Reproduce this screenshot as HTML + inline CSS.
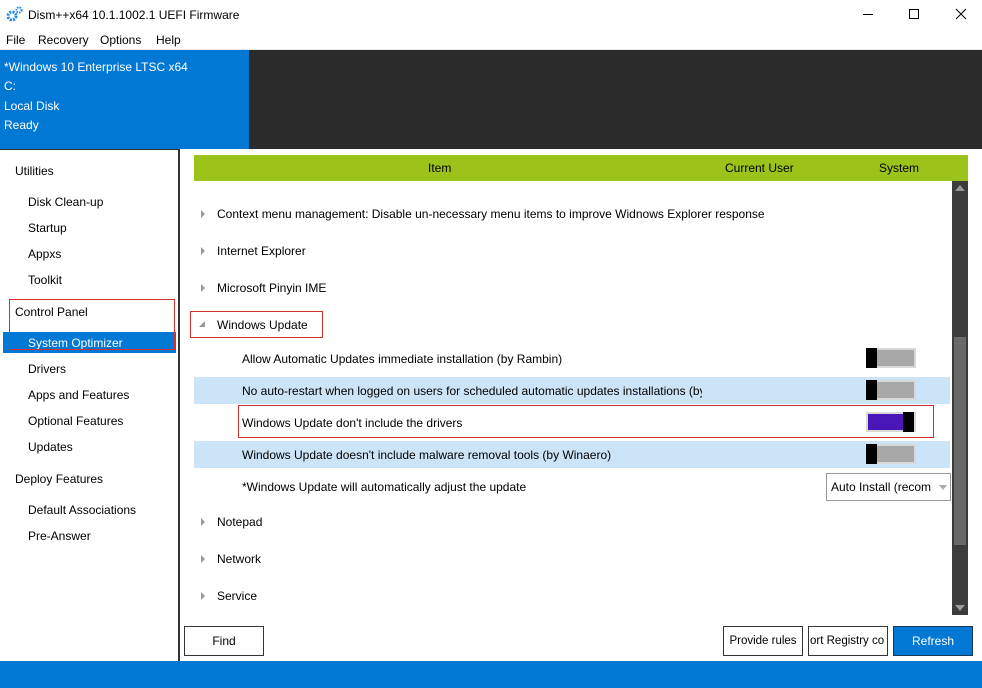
<!DOCTYPE html>
<html><head><meta charset="utf-8"><style>
*{margin:0;padding:0;box-sizing:border-box}
body{width:982px;height:688px;position:relative;overflow:hidden;background:#fff;font-family:"Liberation Sans",sans-serif;font-size:12px;color:#000}
.a{position:absolute;white-space:nowrap}
.red{z-index:5;border:1px solid #d32f2f}
.tri{position:absolute;width:0;height:0;border-top:4px solid transparent;border-bottom:4px solid transparent;border-left:4px solid #999}
.tog{position:absolute;width:50px;height:20px;background:#a8a8a8;border:2px solid #d8d8d8}
.tog i{position:absolute;left:-2px;top:-2px;width:11px;height:20px;background:#000}
.btn{position:absolute;height:30px;border:1px solid #333;background:#fff;text-align:center;line-height:28px;overflow:hidden;white-space:nowrap}
</style></head><body>
<svg class="a" style="left:6px;top:6px" width="18" height="16" viewBox="0 0 18 16"><circle cx="6" cy="10" r="4" fill="none" stroke="#1e88e5" stroke-width="3" stroke-dasharray="2 1.2"/><circle cx="13" cy="4" r="2.6" fill="none" stroke="#1e88e5" stroke-width="2" stroke-dasharray="1.5 1"/></svg>
<div class="a" style="left:28px;top:8px">Dism++x64 10.1.1002.1 UEFI Firmware</div>
<div class="a" style="left:863px;top:14px;width:10px;height:1px;background:#000"></div>
<div class="a" style="left:909px;top:9px;width:10px;height:10px;border:1px solid #000"></div>
<svg class="a" style="left:955px;top:8px" width="12" height="12"><path d="M1 1L11 11M11 1L1 11" stroke="#000" stroke-width="1"/></svg>
<div class="a" style="left:6px;top:33px">File</div>
<div class="a" style="left:38px;top:33px">Recovery</div>
<div class="a" style="left:100px;top:33px">Options</div>
<div class="a" style="left:156px;top:33px">Help</div>
<div class="a" style="left:0;top:49px;width:982px;height:1px;background:#e6e6e6"></div>
<div class="a" style="left:0;top:50px;width:249px;height:99px;background:#0078d4"></div>
<div class="a" style="left:249px;top:50px;width:733px;height:99px;background:#2b2b2b"></div>
<div class="a" style="left:4px;top:58px;color:#fff;line-height:19.3px">*Windows 10 Enterprise LTSC x64<br>C:<br>Local Disk<br>Ready</div>
<div class="a" style="left:0;top:149px;width:180px;height:512px;border-right:2px solid #333;border-top:1px solid #333;background:#fff"></div>
<div class="a" style="left:15px;top:164px">Utilities</div>
<div class="a" style="left:28px;top:195px">Disk Clean-up</div>
<div class="a" style="left:28px;top:221px">Startup</div>
<div class="a" style="left:28px;top:247px">Appxs</div>
<div class="a" style="left:28px;top:273px">Toolkit</div>
<div class="a" style="left:15px;top:305px">Control Panel</div>
<div class="a" style="left:3px;top:332px;width:173px;height:21px;background:#0078d4"></div>
<div class="a" style="left:28px;top:336px;color:#fff">System Optimizer</div>
<div class="a red" style="left:9px;top:299px;width:166px;height:51px"></div>
<div class="a" style="left:28px;top:362px">Drivers</div>
<div class="a" style="left:28px;top:388px">Apps and Features</div>
<div class="a" style="left:28px;top:414px">Optional Features</div>
<div class="a" style="left:28px;top:440px">Updates</div>
<div class="a" style="left:15px;top:472px">Deploy Features</div>
<div class="a" style="left:28px;top:503px">Default Associations</div>
<div class="a" style="left:28px;top:529px">Pre-Answer</div>
<div class="a" style="left:194px;top:155px;width:774px;height:26px;background:#9bc31a"></div>
<div class="a" style="left:428px;top:161px">Item</div>
<div class="a" style="left:725px;top:161px">Current User</div>
<div class="a" style="left:879px;top:161px">System</div>
<div class="a" style="left:952px;top:181px;width:16px;height:434px;background:#3c3c3c"></div>
<div class="a" style="left:954px;top:337px;width:12px;height:208px;background:#6a6a6a"></div>
<svg class="a" style="left:955px;top:185px" width="10" height="6"><path d="M0 6L5 0L10 6Z" fill="#999"/></svg>
<svg class="a" style="left:955px;top:605px" width="10" height="6"><path d="M0 0L5 6L10 0Z" fill="#999"/></svg>
<div class="tri" style="left:201px;top:210px"></div><div class="a" style="left:217px;top:207px">Context menu management: Disable un-necessary menu items to improve Widnows Explorer response</div>
<div class="tri" style="left:201px;top:247px"></div><div class="a" style="left:217px;top:244px">Internet Explorer</div>
<div class="tri" style="left:201px;top:284px"></div><div class="a" style="left:217px;top:281px">Microsoft Pinyin IME</div>
<svg class="a" style="left:199px;top:321px" width="7" height="7"><path d="M6 0L6 6L0 6Z" fill="#999"/></svg>
<div class="a" style="left:217px;top:318px">Windows Update</div>
<div class="a red" style="left:190px;top:311px;width:133px;height:27px"></div>
<div class="a" style="left:242px;top:352px">Allow Automatic Updates immediate installation (by Rambin)</div>
<div class="tog" style="left:866px;top:348px"><i></i></div>
<div class="a" style="left:194px;top:377px;width:756px;height:27px;background:#cce4f7"></div>
<div class="a" style="left:242px;top:384px;width:460px;overflow:hidden">No auto-restart when logged on users for scheduled automatic updates installations (by</div>
<div class="tog" style="left:866px;top:380px"><i></i></div>
<div class="a" style="left:242px;top:416px">Windows Update don't include the drivers</div>
<div class="tog" style="left:866px;top:412px;background:#4a16b8"><i style="left:35px"></i></div>
<div class="a red" style="left:238px;top:405px;width:696px;height:33px"></div>
<div class="a" style="left:194px;top:441px;width:756px;height:27px;background:#cce4f7"></div>
<div class="a" style="left:242px;top:448px">Windows Update doesn't include malware removal tools (by Winaero)</div>
<div class="tog" style="left:866px;top:444px"><i></i></div>
<div class="a" style="left:242px;top:480px">*Windows Update will automatically adjust the update</div>
<div class="a" style="left:826px;top:473px;width:125px;height:28px;border:1px solid #999;background:#fff"></div>
<div class="a" style="left:831px;top:480px">Auto Install (recom</div>
<svg class="a" style="left:939px;top:485px" width="8" height="5"><path d="M0 0L4 5L8 0Z" fill="#aaa"/></svg>
<div class="tri" style="left:201px;top:518px"></div><div class="a" style="left:217px;top:515px">Notepad</div>
<div class="tri" style="left:201px;top:555px"></div><div class="a" style="left:217px;top:552px">Network</div>
<div class="tri" style="left:201px;top:592px"></div><div class="a" style="left:217px;top:589px">Service</div>
<div class="btn" style="left:184px;top:626px;width:80px">Find</div>
<div class="btn" style="left:723px;top:626px;width:80px;font-size:11.5px">Provide rules</div>
<div class="btn" style="left:808px;top:626px;width:80px;text-align:left;padding-left:1px;font-size:11.5px">ort Registry co</div>
<div class="btn" style="left:893px;top:626px;width:80px;background:#0078d4;color:#fff;border-color:#1a3a5a">Refresh</div>
<div class="a" style="left:0;top:661px;width:982px;height:27px;background:#0078d4"></div>
</body></html>
